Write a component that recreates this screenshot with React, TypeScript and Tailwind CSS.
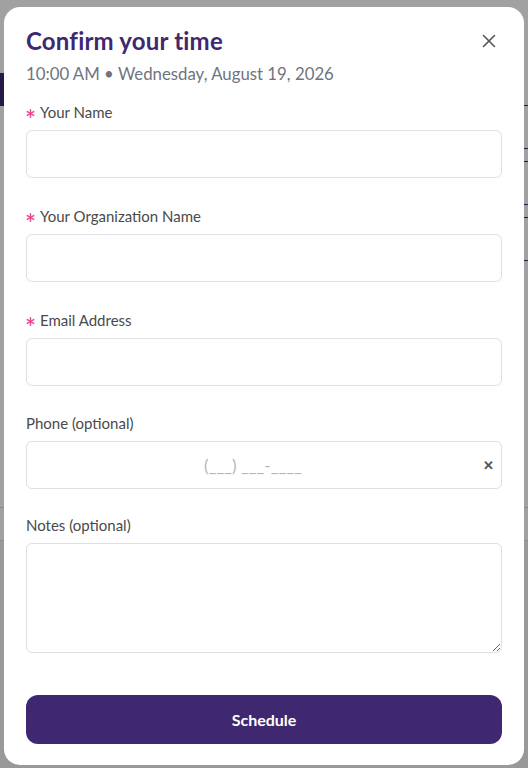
import React from 'react';

const Star = () => (
  <svg width="9" height="9" viewBox="0 0 10 10" className="mr-[5px] mt-[3px] shrink-0" stroke="#e8488f" strokeWidth="1.6" strokeLinecap="round">
    <line x1="5" y1="0.8" x2="5" y2="9.2" />
    <line x1="1.4" y1="2.9" x2="8.6" y2="7.1" />
    <line x1="1.4" y1="7.1" x2="8.6" y2="2.9" />
  </svg>
);

const Label: React.FC<{ text: string; required?: boolean }> = ({ text, required }) => (
  <label className="flex items-center h-5 mb-2 text-[15px] text-[#4a4a4a]">
    {required && <Star />}
    {text}
  </label>
);

const inputCls =
  'block w-full h-12 rounded-[6px] border border-[#dfdfe6] bg-white px-3 text-[15px] text-[#333] outline-none';

const App: React.FC = () => {
  return (
    <div className="relative h-[768px] overflow-hidden bg-white" style={{ fontFamily: 'Lato, "Noto Sans", sans-serif' }}>
      {/* page behind the dialog */}
      <div className="flex flex-col h-full">
        <div className="h-[73px]" />
        <div className="flex justify-between">
          <div className="w-24 h-[33px] bg-[#3f2870] rounded-r-md" />
          <div className="w-24 flex flex-col">
            <div className="h-[32px]" />
            <div className="h-[43px] border-t border-[#3f2870]" />
            <div className="h-[13px] border-t border-[#3f2870]" />
            <div className="h-[43px] border-t border-[#3f2870]" />
            <div className="h-[13px] border-t border-[#3f2870]" />
            <div className="h-[43px] border-t border-[#3f2870]" />
            <div className="border-t border-[#3f2870]" />
          </div>
        </div>
        <div className="h-[246px]" />
        <div className="h-[33px] border-t border-[#c7e3e3]" />
        <div className="flex-1 bg-[#f3f3f3] border-t border-[#e2e2e2]" />
      </div>

      {/* overlay */}
      <div className="absolute inset-0 bg-black/[0.37] flex justify-center pt-[7px]">
        <div className="w-[520px] h-[758px] bg-white rounded-[16px] px-[22px] pt-[18px] flex flex-col">
          <div className="flex items-start justify-between">
            <h2 className="text-[24px] leading-8 font-bold text-[#40286f] tracking-[0.2px]">Confirm your time</h2>
            <button className="mt-[5px] mr-[2px] p-1 text-[#555]">
              <svg width="14" height="14" viewBox="0 0 14 14" stroke="currentColor" strokeWidth="1.6" strokeLinecap="round">
                <line x1="1.5" y1="1.5" x2="12.5" y2="12.5" />
                <line x1="12.5" y1="1.5" x2="1.5" y2="12.5" />
              </svg>
            </button>
          </div>
          <p className="mt-[7px] text-[16.8px] leading-5 text-[#707480]">10:00 AM • Wednesday, August 19, 2026</p>

          <div className="mt-[18px]">
            <Label text="Your Name" required />
            <input className={inputCls} />
          </div>
          <div className="mt-7">
            <Label text="Your Organization Name" required />
            <input className={inputCls} />
          </div>
          <div className="mt-7">
            <Label text="Email Address" required />
            <input className={inputCls} />
          </div>
          <div className="mt-[27px]">
            <Label text="Phone (optional)" />
            <div className="relative">
              <input className={`${inputCls} text-center pl-3 pr-[34px] text-[17px] placeholder:text-[#b3b7c0]`} placeholder="(___) ___-____" />
              <span className="absolute right-[8px] top-1/2 -translate-y-1/2 text-[#555] text-[13px] font-bold leading-none">✕</span>
            </div>
          </div>
          <div className="mt-[26px]">
            <Label text="Notes (optional)" />
            <textarea className="block w-full h-[110px] rounded-[6px] border border-[#dfdfe6] bg-white px-3 py-2 text-[15px] outline-none" />
          </div>

          <button className="mt-[42px] h-[49px] w-full rounded-[12px] bg-[#3f2870] text-white text-[16px] font-bold">
            Schedule
          </button>
        </div>
      </div>
    </div>
  );
};

export default App;
